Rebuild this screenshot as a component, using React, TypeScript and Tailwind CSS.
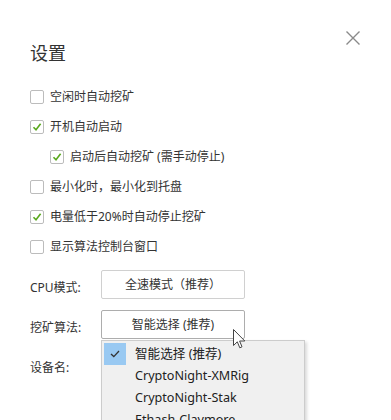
import React from "react";

const FONT = '"Noto Sans", "Noto Sans CJK SC", sans-serif';

type Option = { label: string; checked: boolean; indent?: boolean };

const OPTIONS: Option[] = [
  { label: "空闲时自动挖矿", checked: false },
  { label: "开机自动启动", checked: true },
  { label: "启动后自动挖矿 (需手动停止)", checked: true, indent: true },
  { label: "最小化时，最小化到托盘", checked: false },
  { label: "电量低于20%时自动停止挖矿", checked: true },
  { label: "显示算法控制台窗口", checked: false },
];

const ALGOS = ["智能选择 (推荐)", "CryptoNight-XMRig", "CryptoNight-Stak", "Ethash-Claymore"];

function Checkbox({ checked }: { checked: boolean }) {
  return (
    <span className="flex h-[14px] w-[14px] shrink-0 items-center justify-center rounded-[2px] border border-[#bcbcbc] bg-white">
      {checked && (
        <svg width="10" height="10" viewBox="0 0 10 10">
          <path d="M1.5 5.2 L4 7.8 L8.6 1.8" fill="none" stroke="#5aa81e" strokeWidth="1.6" />
        </svg>
      )}
    </span>
  );
}

export default function App() {
  return (
    <div className="relative h-[420px] w-[391px] overflow-hidden bg-white text-[#333]" style={{ fontFamily: FONT }}>
      <button className="absolute left-[346px] top-[31px]">
        <svg width="14" height="14" viewBox="0 0 14 14">
          <path d="M0.5 0.5 L13.5 13.5 M13.5 0.5 L0.5 13.5" stroke="#8a8a8a" strokeWidth="1.4" />
        </svg>
      </button>

      <div className="flex flex-col pl-[30px] pt-[41px]">
        <h1 className="h-[25px] text-[18px] leading-[25px] text-[#333]">设置</h1>

        <div className="mt-[16px] flex flex-col">
          {OPTIONS.map((o) => (
            <label
              key={o.label}
              className={`flex h-[30px] items-center gap-[6px] text-[12px] ${o.indent ? "pl-[20px]" : ""}`}
            >
              <Checkbox checked={o.checked} />
              <span>{o.label}</span>
            </label>
          ))}
        </div>

        <div className="mt-[8px] flex flex-col gap-[11px]">
          <div className="flex items-center">
            <span className="mt-[6px] w-[71px] text-[12px]">CPU模式:</span>
            <div className="flex h-[29px] w-[144px] items-center justify-center rounded-[2px] border border-[#d0d0d0] bg-white text-[12px]">
              全速模式（推荐）
            </div>
          </div>

          <div className="flex items-center">
            <span className="mt-[6px] w-[71px] text-[12px]">挖矿算法:</span>
            <div className="relative">
              <div className="flex h-[29px] w-[144px] items-center justify-center rounded-[2px] border border-[#adadad] bg-white text-[12px]">
                智能选择 (推荐)
              </div>
              <div className="absolute left-0 top-[30px] z-10 w-[204px] border border-[#cccccc] bg-[#f0f0f0] py-[2px] shadow-[2px_2px_3px_rgba(0,0,0,0.15)]">
                {ALGOS.map((a, i) => (
                  <div key={a} className="flex h-[22px] items-center text-[12.6px] text-[#222]">
                    <span className="ml-[2px] flex h-[22px] w-[22px] items-center justify-center">
                      {i === 0 && (
                        <span className="flex h-[22px] w-[22px] items-center justify-center bg-[#99c9f2]">
                          <svg width="10" height="8" viewBox="0 0 10 8">
                            <path d="M1 4 L3.8 6.6 L9 1" fill="none" stroke="#333" strokeWidth="1.3" />
                          </svg>
                        </span>
                      )}
                    </span>
                    <span className="ml-[9px]">{a}</span>
                  </div>
                ))}
              </div>
              <svg className="absolute left-[132px] top-[19px] z-20" width="13" height="21" viewBox="0 0 13 21">
                <path
                  d="M0.5 0.5 L0.5 16.5 L4.3 12.8 L6.8 18.8 L9 17.8 L6.6 12 L11.8 12 Z"
                  fill="#fff"
                  stroke="#444"
                  strokeWidth="1"
                  strokeLinejoin="round"
                />
              </svg>
            </div>
          </div>

          <div className="flex h-[30px] items-center">
            <span className="mt-[6px] w-[71px] text-[12px]">设备名:</span>
          </div>
        </div>
      </div>
    </div>
  );
}
